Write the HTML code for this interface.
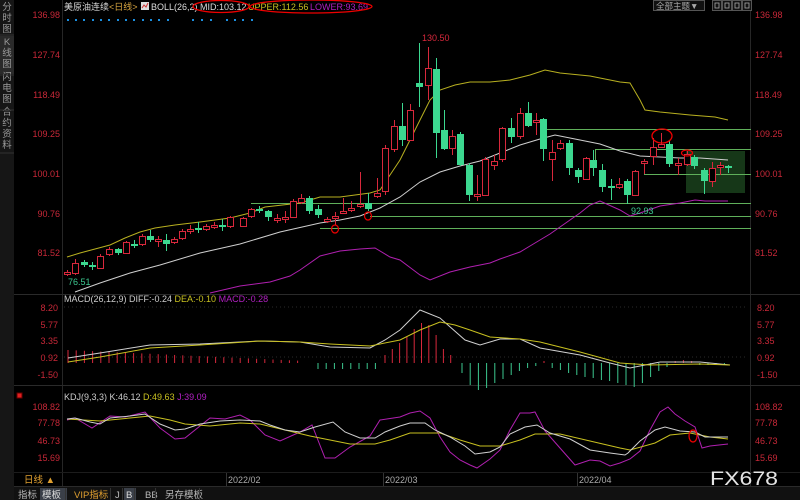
<!DOCTYPE html>
<html><head><meta charset="utf-8"><style>
html,body{margin:0;padding:0;background:#000;}
body{width:800px;height:500px;overflow:hidden;position:relative;font-family:"Liberation Sans","Noto Sans CJK SC",sans-serif;}
svg{position:absolute;left:0;top:0;}
text{font-family:"Liberation Sans","Noto Sans CJK SC",sans-serif;}
</style></head><body>
<svg id="s" width="800" height="500" viewBox="0 0 800 500"></svg>
<script>
const s=document.getElementById('s');let h='';
const add=x=>h+=x;
add('<rect x="0" y="0" width="800" height="500" fill="#000"/>');
add('<rect x="0" y="0" width="14" height="500" fill="#161616"/>');
add('<rect x="0" y="36" width="14" height="38" fill="#2a2a2a"/>');
const side=[["分",10],["时",21],["图",32],["K",45],["线",56],["图",67],["闪",80],["电",91],["图",102],["合",115],["约",126],["资",137],["料",148]];
side.forEach(([c,y])=>add(`<text x="7" y="${y}" font-size="9.5" fill="#9a9a9a" text-anchor="middle">${c}</text>`));
[35,75,110,153].forEach(y=>add(`<line x1="0" x2="14" y1="${y}" y2="${y}" stroke="#333"/>`));
add('<line x1="62.5" y1="0" x2="62.5" y2="486" stroke="#262626"/>');
add('<line x1="750.5" y1="0" x2="750.5" y2="486" stroke="#262626"/>');
[294.5,385.5,486.5].forEach(y=>add(`<line x1="14" x2="800" y1="${y}" y2="${y}" stroke="#2a2a2a"/>`));
add('<text x="64" y="10" font-size="9" fill="#d8d8d8">美原油连续<tspan fill="#d9a640">&lt;日线&gt;</tspan></text>');
add('<rect x="141" y="2" width="8" height="8" fill="#ddd"/><path d="M142 8 L144 5 L146 7 L148 3" stroke="#c33" fill="none"/>');
add('<text x="151" y="10" font-size="9" fill="#ddd">BOLL(26,2) MID:103.12</text>');
add('<text x="248" y="10" font-size="9" fill="#c8c020">UPPER:112.56</text>');
add('<text x="310" y="10" font-size="9" fill="#b020c0">LOWER:93.69</text>');
add('<ellipse cx="221" cy="6.5" rx="28" ry="6" fill="none" stroke="#e00" stroke-width="1.3"/>');
add('<ellipse cx="311" cy="6.5" rx="61" ry="6.5" fill="none" stroke="#e00" stroke-width="1.3"/>');
add('<rect x="653.5" y="0.5" width="51" height="10" fill="#111" stroke="#555"/><text x="656" y="9" font-size="8.5" fill="#aaa">全部主题▼</text>');
[712,722,732,742].forEach(x=>add(`<rect x="${x+.5}" y="0.5" width="9" height="10" fill="#111" stroke="#555"/><rect x="${x+3}" y="3" width="4" height="5" fill="none" stroke="#aaa" stroke-width=".8"/>`));
[68,76,84,93,101,109,118,126,134,143,151,159,168,193,202,211,227,235,243,252].forEach(x=>add(`<rect x="${x-1}" y="19" width="2" height="2" fill="#1b8fe0"/>`));
const axL=[["136.98",14],["127.74",54],["118.49",94],["109.25",133],["100.01",173],["90.76",213],["81.52",252]];
axL.forEach(([t,y])=>{add(`<text x="60" y="${y+4}" font-size="9" fill="#c82838" text-anchor="end">${t}</text>`);add(`<text x="755" y="${y+4}" font-size="9" fill="#c82838">${t}</text>`);});
const axM=[["8.20",307],["5.77",324],["3.35",340],["0.92",357],["-1.50",374]];
axM.forEach(([t,y])=>{add(`<text x="58" y="${y+4}" font-size="9" fill="#c82838" text-anchor="end">${t}</text>`);add(`<text x="757" y="${y+4}" font-size="9" fill="#c82838">${t}</text>`);});
const axK=[["108.82",406],["77.78",422],["46.73",440],["15.69",457]];
axK.forEach(([t,y])=>{add(`<text x="60" y="${y+4}" font-size="9" fill="#c82838" text-anchor="end">${t}</text>`);add(`<text x="755" y="${y+4}" font-size="9" fill="#c82838">${t}</text>`);});
[307,357].forEach(y=>add(`<line x1="64" x2="748" y1="${y}" y2="${y}" stroke="#2a2a2a" stroke-dasharray="1,3"/>`));
add('<rect x="686" y="151" width="59" height="42" fill="#1e4a20" fill-opacity=".75"/>');
const hl=[[540,129],[595,149],[644,174],[251,203],[370,216],[320,228]];
hl.forEach(([x,y])=>add(`<line x1="${x}" x2="751" y1="${y+.5}" y2="${y+.5}" stroke="#5fb05a" stroke-width="1"/>`));
add('<line x1="595.5" x2="595.5" y1="149" y2="168" stroke="#5fb05a"/>');
add('<line x1="644.5" x2="644.5" y1="160" y2="174" stroke="#5fb05a"/>');
const pl=(pts,c,w)=>add(`<polyline points="${pts.map(p=>p.join(',')).join(' ')}" fill="none" stroke="${c}" stroke-width="${w||1}"/>`);
pl([[67,257],[80,253],[95,249],[110,245],[125,238],[140,232],[155,228],[175,225],[200,222],[230,218],[250,213],[265,207],[300,203],[320,197],[340,197],[370,193],[380,190],[390,175],[400,160],[410,140],[420,120],[430,100],[440,90],[455,85],[470,82],[490,82],[510,80],[530,75],[545,70],[560,73],[590,76],[620,82],[630,83],[640,100],[645,110],[660,112],[690,115],[715,117],[728,120]],"#b8b020");
pl([[75,292],[100,283],[130,273],[160,265],[200,253],[240,244],[280,232],[320,223],[340,220],[360,216],[380,208],[400,197],[420,182],[440,172],[460,166],[480,161],[500,153],[520,145],[540,139],[555,135],[580,140],[600,144],[620,151],[640,156],[680,158],[700,158],[728,160]],"#cfcfcf");
pl([[210,293],[240,286],[270,282],[290,276],[300,270],[320,256],[340,251],[360,249],[375,248],[390,257],[400,260],[420,275],[430,280],[450,272],[470,267],[490,263],[500,259],[520,252],[530,246],[550,234],[560,227],[580,213],[590,205],[600,201],[620,210],[630,216],[640,213],[660,206],[680,203],[695,200],[705,201],[728,201]],"#b020b0");
const C=[[67,272,274,270,276,1],[75,263,273,259,275,1],[84,262,265,260,267,0],[92,265,267,262,270,0],[100,256,268,254,269,1],[109,249,254,247,256,1],[118,249,253,248,255,0],[126,242,253,241,254,1],[134,244,246,240,248,0],[142,236,244,234,246,1],[150,236,240,230,242,0],[158,239,241,236,247,1],[166,240,244,234,251,0],[174,239,242,237,244,1],[182,231,238,229,240,1],[190,229,231,225,234,1],[198,228,230,222,233,0],[206,226,229,224,231,1],[214,225,227,222,229,1],[222,225,227,219,231,0],[230,217,226,216,228,1],[243,218,226,217,227,1],[251,209,216,208,218,1],[259,209,211,206,213,0],[268,211,217,210,221,0],[277,218,220,214,223,1],[285,217,219,211,223,1],[293,201,217,199,218,1],[301,198,202,194,204,1],[309,198,211,196,214,0],[318,209,215,205,218,0],[327,219,221,217,223,1],[335,216,218,212,225,1],[343,211,213,198,214,1],[351,208,210,201,212,1],[360,204,206,172,208,1],[368,203,209,193,211,0],[377,193,196,178,198,1],[385,148,191,145,195,1],[394,126,149,120,152,1],[402,126,140,103,146,0],[410,110,140,104,141,1],[419,83,87,43,107,0],[428,68,85,47,100,1],[436,69,133,58,158,0],[444,130,149,110,150,0],[452,136,148,130,155,1],[460,134,165,132,166,0],[469,165,195,163,201,0],[477,194,196,175,201,1],[485,159,195,157,196,1],[494,161,165,155,170,1],[502,128,159,127,162,1],[511,128,137,118,143,0],[520,113,136,108,139,1],[528,113,126,102,127,0],[536,120,122,113,135,1],[543,119,149,118,161,0],[552,152,159,140,181,1],[560,143,148,140,150,1],[569,143,168,140,175,0],[578,170,177,168,183,0],[586,158,179,157,180,1],[593,160,168,150,176,0],[602,170,187,164,192,0],[611,186,188,179,200,0],[619,184,187,178,189,1],[627,181,195,179,204,0],[635,171,195,170,196,1],[644,161,163,159,174,1],[653,147,156,138,165,1],[661,144,147,133,148,1],[669,144,164,141,167,0],[678,163,165,158,175,1],[687,154,164,151,166,1],[694,157,166,155,169,0],[704,170,181,168,194,0],[712,168,181,162,187,1],[720,165,167,162,175,1],[728,166,168,165,173,0]];
C.forEach(([x,t,b,hi,lo,u])=>{const c=u?"#d8283c":"#3cd890";add(`<line x1="${x+.5}" x2="${x+.5}" y1="${hi}" y2="${lo}" stroke="${c}"/>`);
if(u)add(`<rect x="${x-2.5}" y="${t+.5}" width="6" height="${Math.max(b-t,1)}" fill="#000" stroke="${c}"/>`);else add(`<rect x="${x-3}" y="${t}" width="7" height="${Math.max(b-t,2)}" fill="${c}"/>`);});
add('<text x="68" y="285" font-size="9" fill="#3cc890">76.51</text>');
add('<text x="422" y="41" font-size="9" fill="#d8283c">130.50</text>');
add('<text x="631" y="214" font-size="9" fill="#3cc890">92.93</text>');
add('<ellipse cx="335" cy="229" rx="3.5" ry="4" fill="none" stroke="#e00" stroke-width="1.2"/>');
add('<ellipse cx="368" cy="216" rx="3.5" ry="4" fill="none" stroke="#e00" stroke-width="1.2"/>');
add('<ellipse cx="662" cy="136" rx="10" ry="7" fill="none" stroke="#e00" stroke-width="1.3"/>');
add('<ellipse cx="687" cy="153" rx="5.5" ry="3" fill="none" stroke="#e00" stroke-width="1.2"/>');
add('<text x="64" y="302" font-size="9" fill="#ccc">MACD(26,12,9) DIFF:-0.24 <tspan fill="#c8c020">DEA:-0.10</tspan> <tspan fill="#b020c0">MACD:-0.28</tspan></text>');
const Z=363;
for(let i=0;i<29;i++){const x=68+i*8.2;const hh=13-i*0.38;add(`<line x1="${x}" x2="${x}" y1="${Z-hh}" y2="${Z}" stroke="#d8283c"/>`);}
for(let x=318;x<376;x+=8.2)add(`<line x1="${x}" x2="${x}" y1="${Z}" y2="${Z+6}" stroke="#3cc890"/>`);
[8,14,20,26,34,40,38,28,14,8].forEach((v,i)=>{const x=385+i*7.3;add(`<line x1="${x}" x2="${x}" y1="${Z-v}" y2="${Z}" stroke="#d8283c"/>`);});
[10,22,27,25,20,16,12,8,5,3,-2,5,7,10,12,14,15,17,18,20,22,24,20,14,8,4,-2,-3,-2,2,2,1,1].forEach((v,i)=>{const x=462+i*8.2;if(x>730)return;const c=v<0?"#d8283c":"#3cc890";add(`<line x1="${x}" x2="${x}" y1="${v<0?Z+v:Z}" y2="${v<0?Z:Z+v}" stroke="${c}"/>`);});
pl([[68,358],[100,353],[150,345],[200,344],[260,341],[300,342],[330,347],[370,348],[385,340],[400,330],[420,310],[440,318],[465,340],[480,345],[500,339],[520,339],[540,348],[580,355],[610,363],[630,368],[645,365],[660,362],[700,362],[730,365]],"#d0d0d0");
pl([[68,362],[100,357],[150,348],[200,345],[260,341],[300,342],[330,344],[370,346],[400,340],[420,330],[440,322],[455,325],[470,330],[490,337],[520,339],[540,342],[580,352],[620,363],[650,365],[700,364],[730,365]],"#c8c020");
add('<rect x="17" y="393" width="5" height="5" fill="#e02020" stroke="#600"/>');
add('<text x="64" y="400" font-size="9" fill="#ccc">KDJ(9,3,3) K:46.12 <tspan fill="#c8c020">D:49.63</tspan> <tspan fill="#b020c0">J:39.09</tspan></text>');
pl([[67,420],[75,418],[92,428],[110,416],[125,417],[145,412],[160,428],[175,439],[185,438],[200,426],[210,418],[225,419],[240,415],[250,420],[265,435],[280,441],[300,432],[312,425],[325,458],[335,458],[350,447],[370,436],[380,420],[400,417],[410,413],[420,411],[430,418],[440,437],[450,452],[460,460],[470,465],[477,468],[490,459],[500,450],[510,430],[520,413],[530,413],[535,412],[545,431],[560,448],[575,465],[590,460],[600,461],[610,466],[620,463],[630,459],[640,451],[650,430],[660,412],[668,407],[675,414],[685,421],[695,427],[702,448],[710,446],[728,444]],"#b020b0");
pl([[67,419],[100,421],[130,418],[150,416],[170,420],[185,424],[210,426],[240,423],[260,424],[285,430],[310,436],[330,440],[350,444],[375,444],[390,440],[410,433],[440,433],[460,440],[480,446],[500,446],[520,440],[535,434],[560,434],[590,441],[620,448],[630,450],[655,443],[670,435],[690,433],[710,437],[728,439]],"#c8c020");
pl([[67,419],[75,418],[90,422],[100,424],[110,418],[130,416],[145,414],[160,424],[175,430],[185,429],[200,424],[220,421],[240,420],[260,421],[270,425],[285,430],[300,432],[315,427],[333,422],[345,432],[360,438],[375,438],[385,432],[400,426],[410,423],[425,423],[435,430],[450,437],[465,446],[475,454],[490,452],[500,447],[510,434],[525,427],[537,425],[550,433],[570,439],[590,450],[610,453],[625,455],[628,453],[640,441],[655,430],[665,427],[680,431],[695,432],[705,437],[728,437]],"#d0d0d0");
add('<ellipse cx="693" cy="436" rx="4" ry="6" fill="none" stroke="#e00" stroke-width="1.2"/>');
add('<line x1="14" x2="800" y1="472.5" y2="472.5" stroke="#1c1c1c"/>');
add('<text x="24" y="483" font-size="9.5" fill="#e0a030">日线 ▲</text>');
[[228,"2022/02"],[385,"2022/03"],[579,"2022/04"]].forEach(([x,t])=>{add(`<line x1="${x-1.5}" x2="${x-1.5}" y1="473" y2="486" stroke="#333"/><text x="${x}" y="483" font-size="9" fill="#aaa">${t}</text>`);});
add('<text x="710" y="485" font-size="19" fill="#e4e4e4" textLength="68" lengthAdjust="spacingAndGlyphs">FX678</text>');
add('<rect x="14" y="487" width="786" height="13" fill="#111"/>');
const tabs=[[18,"指标","#bbb",0,28],[42,"模板","#ddd",1,27],[74,"VIP指标","#e0a030",0,40],[115,"J","#bbb",0,11],[126,"B","#ddd",1,12],[145,"BB","#bbb",0,14],[165,"另存模板","#bbb",0,38]];
tabs.forEach(([x,t,c,a,w])=>{if(a)add(`<rect x="${x-2}" y="488" width="${w}" height="12" fill="#3a3f48"/>`);add(`<text x="${x}" y="498" font-size="9.5" fill="${c}">${t}</text><line x1="${x+w-3.5}" x2="${x+w-3.5}" y1="488" y2="500" stroke="#333"/>`);});
s.innerHTML=h;
</script>
</body></html>
